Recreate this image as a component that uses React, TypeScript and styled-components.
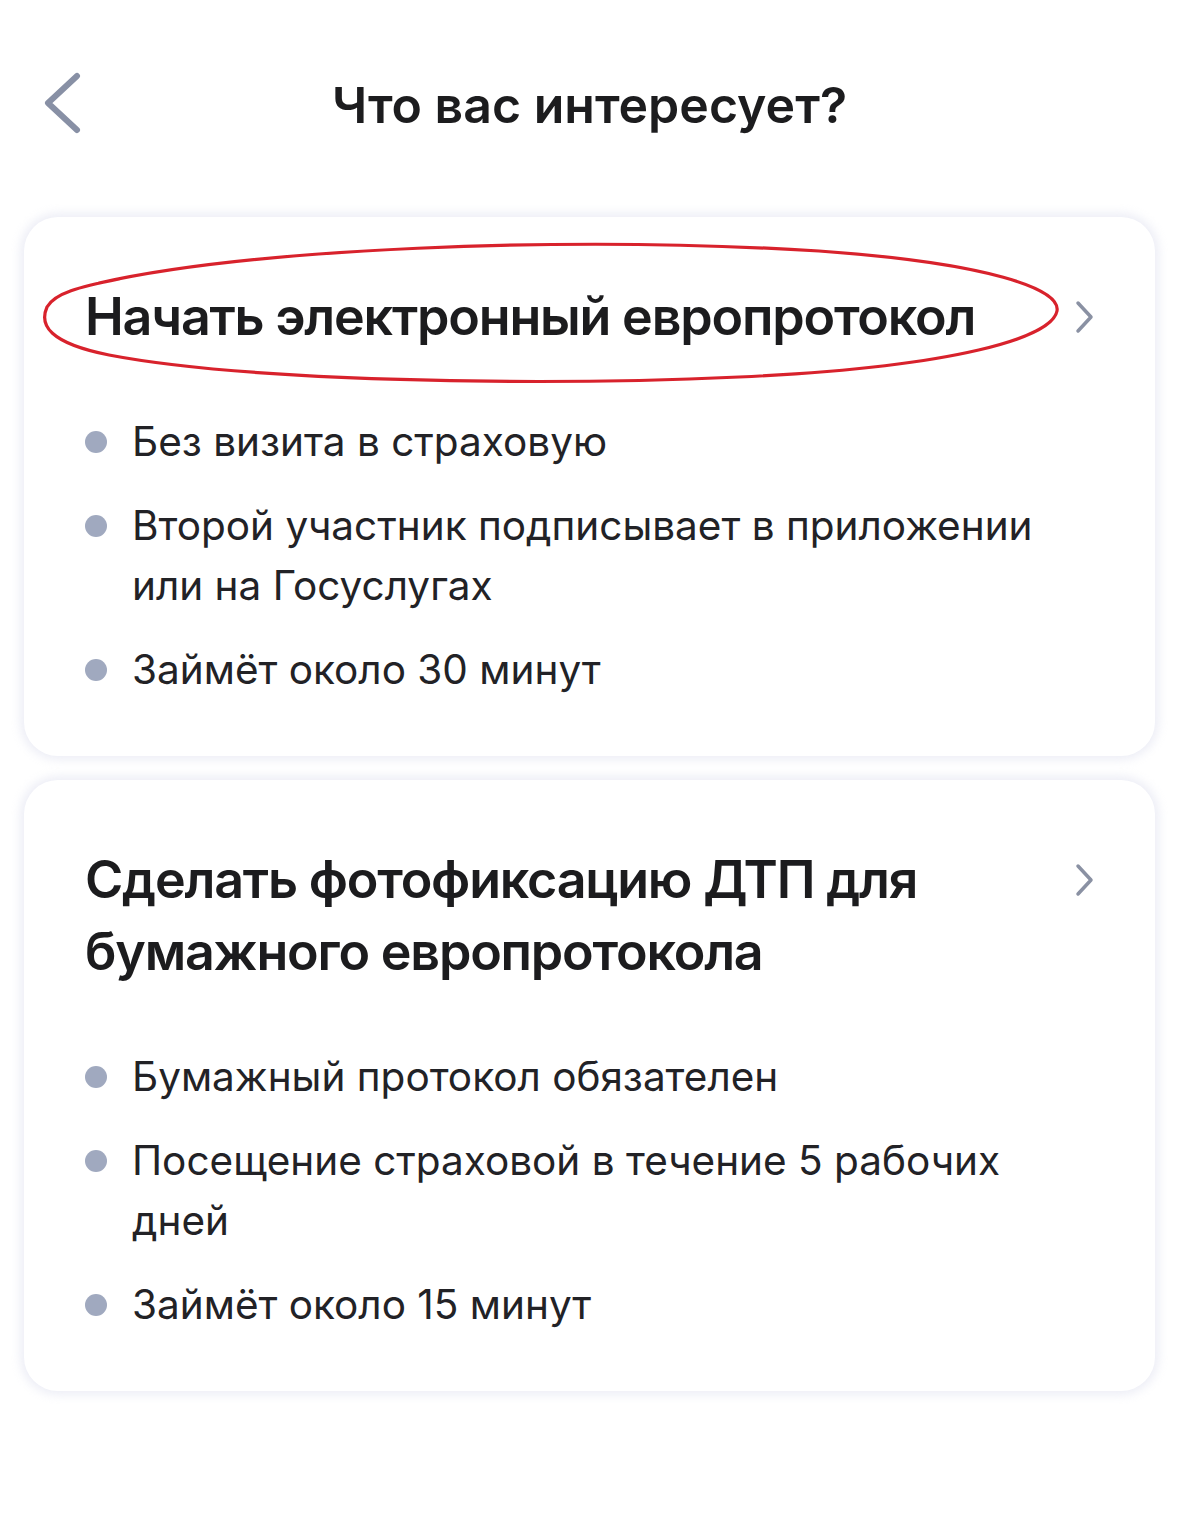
import styled, { createGlobalStyle } from "styled-components";

const GlobalStyle = createGlobalStyle`
  html, body {
    margin: 0;
    padding: 0;
    background: #ffffff;
  }
  body {
    font-family: Inter, "Noto Sans", "Liberation Sans", sans-serif;
    color: #1c1c1e;
    -webkit-font-smoothing: antialiased;
  }
`;

interface Option {
  title: string;
  points: string[];
  marked?: boolean;
}

const options: Option[] = [
  {
    title: "Начать электронный европротокол",
    points: [
      "Без визита в страховую",
      "Второй участник подписывает в приложении или на Госуслугах",
      "Займёт около 30 минут",
    ],
    marked: true,
  },
  {
    title: "Сделать фотофиксацию ДТП для бумажного европротокола",
    points: [
      "Бумажный протокол обязателен",
      "Посещение страховой в течение 5 рабочих дней",
      "Займёт около 15 минут",
    ],
  },
];

const BackIcon = () => (
  <svg width="44" height="62" viewBox="0 0 44 62" fill="none">
    <path
      d="M38 4 L9 31 L38 58"
      stroke="#8890a5"
      strokeWidth="6"
      strokeLinecap="round"
      strokeLinejoin="round"
    />
  </svg>
);

const ChevronIcon = () => (
  <svg width="22" height="34" viewBox="0 0 22 34" fill="none">
    <path
      d="M5 3 L18 17 L5 31"
      stroke="#8a91a3"
      strokeWidth="3.5"
      strokeLinecap="round"
      strokeLinejoin="round"
    />
  </svg>
);

const Scribble = () => (
  <svg
    className="scribble"
    width="1030"
    height="150"
    viewBox="0 0 1030 150"
    fill="none"
  >
    <path
      d="M60 44 C 210 10, 520 -4, 780 12 C 950 24, 1022 50, 1018 72 C 1013 98, 920 128, 700 138 C 480 148, 200 141, 70 116 C 10 104, 0 86, 8 68 C 16 54, 40 48, 80 40"
      stroke="#d8222c"
      strokeWidth="3.2"
      strokeLinecap="round"
    />
  </svg>
);

export default function App() {
  return (
    <>
      <GlobalStyle />
      <Screen>
        <TopBar>
          <BackButton aria-label="Назад">
            <BackIcon />
          </BackButton>
          <PageTitle>Что вас интересует?</PageTitle>
        </TopBar>

        <CardList>
          {options.map((opt) => (
            <Card key={opt.title}>
              <CardHead>
                <CardTitle>{opt.title}</CardTitle>
                <ChevronWrap>
                  <ChevronIcon />
                </ChevronWrap>
                {opt.marked ? <Scribble /> : null}
              </CardHead>
              <Points>
                {opt.points.map((p) => (
                  <Point key={p}>
                    <Dot />
                    <PointText>{p}</PointText>
                  </Point>
                ))}
              </Points>
            </Card>
          ))}
        </CardList>
      </Screen>
    </>
  );
}

const Screen = styled.div`
  width: 1179px;
  min-height: 1519px;
  background: #ffffff;
  box-sizing: border-box;
  padding: 0 24px;
`;

const TopBar = styled.header`
  position: relative;
  height: 217px;
  display: flex;
  justify-content: center;
  padding-top: 72px;
  box-sizing: border-box;
`;

const BackButton = styled.button`
  position: absolute;
  left: 15px;
  top: 71px;
  width: 44px;
  height: 64px;
  padding: 0;
  border: none;
  background: transparent;
  display: flex;
  align-items: center;
  justify-content: center;
`;

const PageTitle = styled.h1`
  margin: 0;
  font-size: 50px;
  line-height: 66px;
  font-weight: 600;
  letter-spacing: 0;
  color: #1c1c1e;
  height: 66px;
`;

const CardList = styled.div`
  display: flex;
  flex-direction: column;
  gap: 24px;
`;

const Card = styled.section`
  background: #ffffff;
  border-radius: 34px;
  box-shadow: 0 0 10px 4px rgba(214, 218, 236, 0.45);
  padding: 64px 60px 56px 61px;
  display: flex;
  flex-direction: column;
  gap: 59px;
`;

const CardHead = styled.div`
  position: relative;
  display: grid;
  grid-template-columns: 1fr 40px;
  align-items: start;
  gap: 16px;

  .scribble {
    position: absolute;
    left: -46px;
    top: -42px;
    pointer-events: none;
  }
`;

const CardTitle = styled.h2`
  margin: 0;
  font-size: 52px;
  line-height: 72px;
  font-weight: 600;
  letter-spacing: -1.2px;
  color: #1c1c1e;
`;

const ChevronWrap = styled.div`
  height: 72px;
  display: flex;
  align-items: center;
  justify-content: flex-end;
`;

const Points = styled.ul`
  list-style: none;
  margin: 0;
  padding: 0;
  display: flex;
  flex-direction: column;
  gap: 24px;
`;

const Point = styled.li`
  display: flex;
  align-items: flex-start;
  gap: 25px;
`;

const Dot = styled.span`
  flex: none;
  width: 22px;
  height: 22px;
  margin-top: 19px;
  border-radius: 50%;
  background: #a0a9bf;
`;

const PointText = styled.span`
  font-size: 40.5px;
  line-height: 60px;
  font-weight: 400;
  color: #222226;
`;
